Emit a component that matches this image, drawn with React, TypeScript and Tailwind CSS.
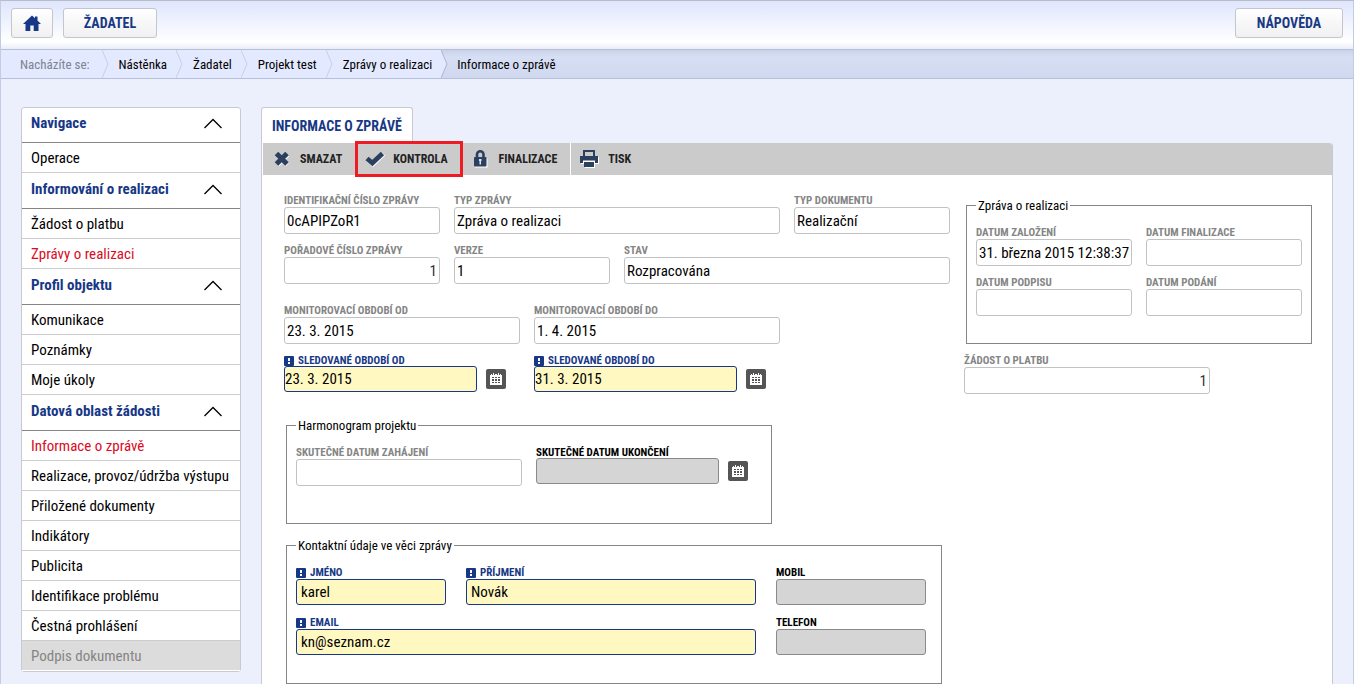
import { useId } from 'react';
import type { ReactNode } from 'react';
import clsx from 'clsx';

type MenuItem = { label: string; state?: 'active' | 'disabled' };

const MENU: { title: string; items: MenuItem[] }[] = [
    { title: 'Navigace', items: [{ label: 'Operace' }] },
    {
        title: 'Informování o realizaci',
        items: [{ label: 'Žádost o platbu' }, { label: 'Zprávy o realizaci', state: 'active' }],
    },
    {
        title: 'Profil objektu',
        items: [{ label: 'Komunikace' }, { label: 'Poznámky' }, { label: 'Moje úkoly' }],
    },
    {
        title: 'Datová oblast žádosti',
        items: [
            { label: 'Informace o zprávě', state: 'active' },
            { label: 'Realizace, provoz/údržba výstupu' },
            { label: 'Přiložené dokumenty' },
            { label: 'Indikátory' },
            { label: 'Publicita' },
            { label: 'Identifikace problému' },
            { label: 'Čestná prohlášení' },
            { label: 'Podpis dokumentu', state: 'disabled' },
        ],
    },
];

const CRUMBS = ['Nástěnka', 'Žadatel', 'Projekt test', 'Zprávy o realizaci'];

function HomeIcon() {
    return (
        <svg width="18" height="17" viewBox="0 0 18 17" fill="#173886" aria-hidden="true">
            <path d="M9 0.5 L12 3.3 V1.5 H14.5 V5.6 L18 9 H15.5 V16 H10.7 V10.5 H7.3 V16 H2.5 V9 H0 Z" />
        </svg>
    );
}

function CrossIcon() {
    return (
        <svg width="16" height="16" viewBox="0 0 16 16" aria-hidden="true">
            <path d="M3.5 3.5 L13.5 13.5 M13.5 3.5 L3.5 13.5" stroke="#fff" strokeWidth="4.8" />
            <path d="M2.5 2.5 L13 13 M13 2.5 L2.5 13" stroke="#2b3f5e" strokeWidth="5" />
        </svg>
    );
}

function CheckIcon() {
    return (
        <svg width="20" height="16" viewBox="0 0 20 16" fill="none" aria-hidden="true">
            <path d="M3 8.5 L8 13 L18.5 3" stroke="#fff" strokeWidth="4.6" />
            <path d="M2 7.5 L7.4 12 L17.5 2.5" stroke="#2b3f5e" strokeWidth="4.8" />
        </svg>
    );
}

function LockIcon() {
    return (
        <svg width="15" height="18" viewBox="0 0 15 18" aria-hidden="true">
            <path d="M1.8 8.5 H14.5 V17.5 H1.8 Z" fill="#fff" />
            <path d="M4 8 V4.5 A3 3 0 0 1 10.5 4.5 V8" stroke="#2b3f5e" strokeWidth="2.6" fill="none" />
            <rect x="1" y="7" width="12.5" height="9.5" rx="1" fill="#2b3f5e" />
            <path d="M6 9 H8.5 V11 H8 V14.5 H6.5 V11 H6 Z" fill="#dfe3ea" />
        </svg>
    );
}

function PrinterIcon() {
    return (
        <svg width="19" height="18" viewBox="0 0 19 18" aria-hidden="true">
            <path d="M1 7 H19 V14 H15 V18 H5 V14 H1 Z" fill="#fff" />
            <path d="M3 0 H15 V6 H18 V13 H15 V10.5 H3 V13 H0 V6 H3 Z M5 2 V6 H13 V2 Z" fill="#2b3f5e" fillRule="evenodd" />
            <rect x="4" y="12" width="10" height="5" fill="#2b3f5e" />
        </svg>
    );
}

function CalendarIcon() {
    return (
        <svg width="12" height="12" viewBox="0 0 12 12" shapeRendering="crispEdges" aria-hidden="true">
            <path d="M0 2 H1 V1 H2 V2 H3 V0 H4 V2 H5 V1 H7 V2 H8 V0 H9 V2 H10 V1 H11 V2 H12 V12 H0 Z" fill="#fff" />
            <path
                d="M2 4h2v1H2z M5 4h2v1H5z M8 4h2v1H8z M2 6h2v2H2z M5 6h2v2H5z M8 6h2v2H8z M2 9h2v1H2z M5 9h2v1H5z M8 9h2v1H8z"
                fill="#555"
            />
        </svg>
    );
}

function RequiredIcon() {
    return (
        <svg className="mr-1 shrink-0" width="10" height="10" viewBox="0 0 10 10" aria-hidden="true">
            <rect width="10" height="10" rx="1" fill="#173886" />
            <path d="M4 2h2v3H4z M4 6h2v2H4z" fill="#fff" />
        </svg>
    );
}

function Chevron({ last }: { last?: boolean }) {
    return (
        <svg className="shrink-0" width="7" height="28" viewBox="0 0 7 28" aria-hidden="true">
            {last && <path d="M0 0 L6 14 L0 28 Z" fill="#e3e9fe" />}
            <path d="M0 0 L6 14 L0 28" fill="none" stroke={last ? '#aab5d0' : '#c8d0e6'} />
        </svg>
    );
}

type FieldProps = {
    label: string;
    value?: string;
    width: string;
    kind?: 'readonly' | 'required' | 'disabled';
    date?: boolean;
    right?: boolean;
};

function Field({ label, value = '', width, kind = 'readonly', date, right }: FieldProps) {
    const id = useId();
    return (
        <div>
            <label
                htmlFor={id}
                className={clsx(
                    'flex items-center whitespace-nowrap pt-1 text-[11px] leading-3 font-bold',
                    date ? 'h-[15px]' : 'h-4',
                    kind === 'readonly' && 'text-[#858585]',
                    kind === 'required' && 'text-[#173886]',
                    kind === 'disabled' && 'text-black',
                )}
            >
                {kind === 'required' && <RequiredIcon />}
                {label}
            </label>
            <div className="flex items-center">
                <input
                    id={id}
                    type="text"
                    defaultValue={value}
                    readOnly={kind === 'readonly'}
                    disabled={kind === 'disabled'}
                    className={clsx(
                        'block rounded-[3px] border text-[15px] outline-none',
                        width,
                        kind === 'readonly' && 'h-[27px] border-[#c2c2c2] bg-white',
                        kind === 'required' && 'h-[26px] border-[#173886] bg-[#fff8c0]',
                        kind === 'disabled' && 'h-[26px] border-[#8a8a8a] bg-[#d5d5d5]',
                        kind === 'readonly' ? 'px-0.5' : date ? 'px-0' : 'px-1',
                        right && 'text-right text-[#333]',
                    )}
                />
                {date && (
                    <button
                        type="button"
                        aria-label="Vybrat datum"
                        className="ml-[9px] flex size-5 items-center justify-center rounded-[2px] bg-[#555]"
                    >
                        <CalendarIcon />
                    </button>
                )}
            </div>
        </div>
    );
}

function Group({ title, className, children }: { title: string; className?: string; children: ReactNode }) {
    return (
        <fieldset className={clsx('ml-0.5 border border-[#858585] px-[9px] pt-2', className)}>
            <legend className="h-5 px-0.5 text-[13px] leading-[22px]">{title}</legend>
            {children}
        </fieldset>
    );
}

function ToolButton({ icon, label, divider }: { icon: ReactNode; label: string; divider?: boolean }) {
    return (
        <button
            type="button"
            className={clsx(
                'flex h-8 items-center pr-[13px] text-[12px] font-bold text-[#222]',
                divider && 'border-r border-white',
            )}
        >
            <span className="flex w-[37px] justify-center">{icon}</span>
            {label}
        </button>
    );
}

function HeaderButton({ children, className, label }: { children: ReactNode; className: string; label?: string }) {
    return (
        <button
            type="button"
            aria-label={label}
            className={clsx(
                'flex h-[30px] items-center justify-center rounded-[3px] border border-[#c4c6cc] bg-linear-to-b from-white to-[#f0f0f0] text-[14px] font-bold text-[#173886]',
                className,
            )}
        >
            {children}
        </button>
    );
}

function Sidebar() {
    return (
        <nav className="w-[220px] shrink-0 rounded-[3px] border border-[#c8cad0] bg-white text-[15px]">
            {MENU.map((section) => (
                <div key={section.title} className="group">
                    <button
                        type="button"
                        className="flex h-9 w-full items-center justify-between border-b border-[#858585] pr-[17px] pb-0.5 pl-[9px] font-bold text-[#173886] group-first:h-[35px] group-first:pb-1"
                    >
                        {section.title}
                        <svg width="20" height="11" viewBox="0 0 20 11" fill="none" aria-hidden="true">
                            <path d="M1.5 10 L10 1.5 L18.5 10" stroke="#000" strokeWidth="1.3" />
                        </svg>
                    </button>
                    {section.items.map((item) => (
                        <a
                            key={item.label}
                            href="#"
                            className={clsx(
                                'flex h-[30px] items-center whitespace-nowrap border-b pt-0.5 pl-[9px]',
                                item.state === 'active' && 'text-[#dc0a23]',
                                item.state === 'disabled'
                                    ? 'border-white bg-[#dcdcdc] text-[#858585]'
                                    : 'border-[#cdcdcd]',
                            )}
                        >
                            {item.label}
                        </a>
                    ))}
                </div>
            ))}
        </nav>
    );
}

export default function App() {
    return (
        <div className="flex min-h-screen flex-col border-x border-t border-x-[#c3cce4] border-t-[#b9bcc6] bg-[#ecf0fd] font-['Roboto_Condensed','Liberation_Sans_Narrow',Roboto,sans-serif] text-black">
            <header className="flex h-[49px] items-start justify-between border-b border-[#b6bfd6] bg-linear-to-b from-[#dfe6fd] via-white via-85% to-[#e9edf7] px-2.5 pt-[7px]">
                <div className="flex gap-2.5">
                    <HeaderButton className="w-[42px]" label="Domů">
                        <HomeIcon />
                    </HeaderButton>
                    <HeaderButton className="w-[94px]">ŽADATEL</HeaderButton>
                </div>
                <HeaderButton className="w-[108px]">NÁPOVĚDA</HeaderButton>
            </header>

            <div className="flex h-[29px] border-b border-[#b6c0d9] bg-linear-to-b from-[#c9d2e9] via-[#d7dff5] via-25% to-[#cfd8ee] text-[13px]">
                <div className="flex items-center bg-[#e3e9fe] pl-[19px]">
                    <span className="pt-0.5 pr-3 text-[#7b8494]">Nacházíte se:</span>
                    {CRUMBS.map((crumb) => (
                        <span key={crumb} className="flex items-center">
                            <Chevron />
                            <a href="#" className="pt-0.5 pr-[9px] pl-2.5">
                                {crumb}
                            </a>
                        </span>
                    ))}
                </div>
                <Chevron last />
                <span className="flex items-center pt-0.5 pl-[9px]">Informace o zprávě</span>
            </div>

            <div className="flex flex-1 items-start gap-5 px-5 pt-7">
                <Sidebar />

                <main className="flex min-w-0 flex-1 flex-col self-stretch">
                    <div className="flex">
                        <h1 className="flex h-9 items-center rounded-t-[3px] border border-b-0 border-[#c8cad0] bg-white px-2.5 pt-0.5 text-[14px] font-bold text-[#173886]">
                            INFORMACE O ZPRÁVĚ
                        </h1>
                    </div>
                    <div className="flex-1 rounded-tr-[3px] border-x border-[#c8cad0] bg-white">
                        <div className="ml-px flex rounded-tr-[3px] bg-[#cbcbcb]">
                            <ToolButton icon={<CrossIcon />} label="SMAZAT" divider />
                            <div className="relative">
                                <ToolButton icon={<CheckIcon />} label="KONTROLA" divider />
                                <div className="pointer-events-none absolute -inset-x-px -inset-y-0.5 border-[3px] border-[#ed1c24]" />
                            </div>
                            <ToolButton icon={<LockIcon />} label="FINALIZACE" divider />
                            <ToolButton icon={<PrinterIcon />} label="TISK" />
                        </div>

                        <form className="flex gap-3.5 pt-4 pl-[22px]">
                            <div className="w-[666px] shrink-0">
                                <div className="flex flex-col gap-[7px]">
                                    <div className="flex gap-3.5">
                                        <Field label="IDENTIFIKAČNÍ ČÍSLO ZPRÁVY" value="0cAPIPZoR1" width="w-[156px]" />
                                        <Field label="TYP ZPRÁVY" value="Zpráva o realizaci" width="w-[326px]" />
                                        <Field label="TYP DOKUMENTU" value="Realizační" width="w-[156px]" />
                                    </div>
                                    <div className="flex gap-3.5">
                                        <Field label="POŘADOVÉ ČÍSLO ZPRÁVY" value="1" width="w-[156px]" right />
                                        <Field label="VERZE" value="1" width="w-[156px]" />
                                        <Field label="STAV" value="Rozpracována" width="w-[326px]" />
                                    </div>
                                </div>

                                <div className="mt-[17px] grid grid-cols-[236px_246px] gap-x-3.5 gap-y-[7px]">
                                    <Field label="MONITOROVACÍ OBDOBÍ OD" value="23. 3. 2015" width="w-[236px]" />
                                    <Field label="MONITOROVACÍ OBDOBÍ DO" value="1. 4. 2015" width="w-[246px]" />
                                    <Field label="SLEDOVANÉ OBDOBÍ OD" value="23. 3. 2015" width="w-[193px]" kind="required" date />
                                    <Field label="SLEDOVANÉ OBDOBÍ DO" value="31. 3. 2015" width="w-[203px]" kind="required" date />
                                </div>

                                <Group title="Harmonogram projektu" className="mt-[23px] w-[486px] pb-[37px]">
                                    <div className="flex gap-3.5">
                                        <Field label="SKUTEČNÉ DATUM ZAHÁJENÍ" width="w-[226px]" />
                                        <Field label="SKUTEČNÉ DATUM UKONČENÍ" width="w-[183px]" kind="disabled" date />
                                    </div>
                                </Group>

                                <Group title="Kontaktní údaje ve věci zprávy" className="mt-[11px] w-[656px] pb-7">
                                    <div className="flex flex-col gap-2">
                                        <div className="flex gap-5">
                                            <Field label="JMÉNO" value="karel" width="w-[150px]" kind="required" />
                                            <Field label="PŘÍJMENÍ" value="Novák" width="w-[290px]" kind="required" />
                                            <Field label="MOBIL" width="w-[150px]" kind="disabled" />
                                        </div>
                                        <div className="flex gap-5">
                                            <Field label="EMAIL" value="kn@seznam.cz" width="w-[460px]" kind="required" />
                                            <Field label="TELEFON" width="w-[150px]" kind="disabled" />
                                        </div>
                                    </div>
                                </Group>
                            </div>

                            <div className="pt-1">
                                <Group title="Zpráva o realizaci" className="w-[346px] pb-[27px]">
                                    <div className="grid grid-cols-[156px_156px] gap-x-3.5 gap-y-[7px]">
                                        <Field label="DATUM ZALOŽENÍ" value="31. března 2015 12:38:37" width="w-[156px]" />
                                        <Field label="DATUM FINALIZACE" width="w-[156px]" />
                                        <Field label="DATUM PODPISU" width="w-[156px]" />
                                        <Field label="DATUM PODÁNÍ" width="w-[156px]" />
                                    </div>
                                </Group>
                                <div className="mt-[7px]">
                                    <Field label="ŽÁDOST O PLATBU" value="1" width="w-[246px]" right />
                                </div>
                            </div>
                        </form>
                    </div>
                </main>
            </div>
        </div>
    );
}
